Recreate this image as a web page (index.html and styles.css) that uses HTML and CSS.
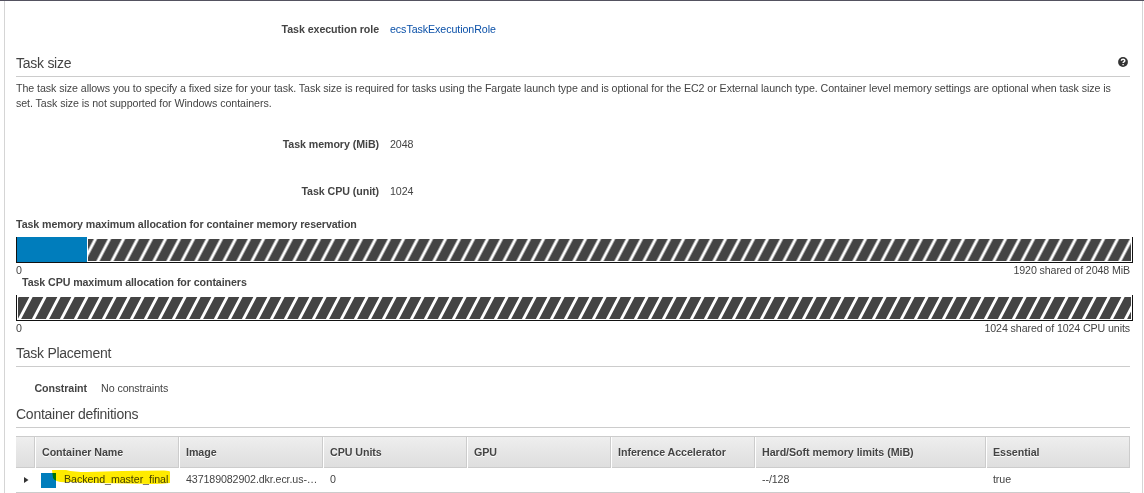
FILE: index.html
```html
<!DOCTYPE html>
<html lang="en">
<head>
<meta charset="utf-8">
<title>Task definition</title>
<link rel="stylesheet" href="styles.css">
</head>
<body>
<main class="panel">
  <dl class="field field-role"><dt>Task execution role</dt><dd><a class="link" href="#">ecsTaskExecutionRole</a></dd></dl>
  <section>
    <h2 class="heading heading-size">Task size
      <svg class="help" viewBox="0 0 10 10" role="img" aria-label="Help"><circle cx="5" cy="5" r="4.9" fill="#333"/><path d="M3.3 3.8C3.3 1.7 6.8 1.7 6.8 3.8C6.8 5 5.1 4.9 5.1 6.1" fill="none" stroke="#fff" stroke-width="1.4"/><path d="M4.4 6.9h1.4v1.3H4.4z" fill="#fff"/></svg>
    </h2>
    <p class="intro">The task size allows you to specify a fixed size for your task. Task size is required for tasks using the Fargate launch type and is optional for the EC2 or External launch type. Container level memory settings are optional when task size is<br>set. Task size is not supported for Windows containers.</p>
    <dl class="field field-memory"><dt>Task memory (MiB)</dt><dd>2048</dd></dl>
    <dl class="field field-cpu"><dt>Task CPU (unit)</dt><dd>1024</dd></dl>
    <div class="allocation">
      <h3 class="allocation-title">Task memory maximum allocation for container memory reservation</h3>
      <div class="bar"><div class="used"></div><svg class="shared"><defs><pattern id="stripes-memory" width="14" height="24" patternUnits="userSpaceOnUse" patternTransform="translate(-5.5 0)"><path d="M0 0h14v24H0z" fill="#444"/><path d="M13.5 -1L0.4 24M27.5 -1L14.4 24M-0.5 -1L-13.6 24" stroke="#fff" stroke-width="2.9"/></pattern></defs><rect width="100%" height="100%" fill="url(#stripes-memory)"/></svg></div>
      <div class="scale"><span>0</span><span>1920 shared of 2048 MiB</span></div>
    </div>
    <div class="allocation">
      <h3 class="allocation-title allocation-title-cpu">Task CPU maximum allocation for containers</h3>
      <div class="bar"><svg class="shared"><defs><pattern id="stripes-cpu" width="14" height="24" patternUnits="userSpaceOnUse"><path d="M0 0h14v24H0z" fill="#444"/><path d="M13.5 -1L0.4 24M27.5 -1L14.4 24M-0.5 -1L-13.6 24" stroke="#fff" stroke-width="2.9"/></pattern></defs><rect width="100%" height="100%" fill="url(#stripes-cpu)"/></svg></div>
      <div class="scale"><span>0</span><span>1024 shared of 1024 CPU units</span></div>
    </div>
  </section>
  <section>
    <h2 class="heading heading-placement">Task Placement</h2>
    <dl class="field field-constraint"><dt>Constraint</dt><dd>No constraints</dd></dl>
  </section>
  <section>
    <h2 class="heading heading-containers">Container definitions</h2>
    <div class="table">
      <div class="row head"><span></span><span>Container Name</span><span>Image</span><span>CPU Units</span><span>GPU</span><span>Inference Accelerator</span><span>Hard/Soft memory limits (MiB)</span><span>Essential</span></div>
      <div class="row data"><span class="expander"><svg class="caret" viewBox="0 0 5 6"><path d="M0 0L4.5 3L0 6z" fill="#333"/></svg></span><span class="name"><i class="swatch"></i><span class="name-text">Backend_master_final</span><svg class="marker" viewBox="0 0 118 15"><path d="M0 0L14 0Q22 2 35 2L70 1L112 0.5Q118 0.5 118 2V13Q110 14 100 14L45 13L17 12Q3 13 1 8z" fill="#ffeb00"/></svg></span><span>437189082902.dkr.ecr.us-…</span><span>0</span><span></span><span></span><span>--/128</span><span>true</span></div>
    </div>
  </section>
</main>
</body>
</html>
```
FILE: styles.css
```css
* { box-sizing: border-box; }
body { margin: 0; height: 493px; overflow: hidden; background: #fff; color: #444; font: 10.67px/15px "Liberation Sans", Arial, sans-serif; letter-spacing: -0.067px; border-top: 1px solid #545260; }
.panel { height: 492px; margin: 0 1px 0 4px; padding: 21px 11px 0; border: solid #d5d5d5; border-width: 0 1px; }
dl, dd, p, h2, h3 { margin: 0; }
.field { display: flex; }
.field dt { width: 363px; text-align: right; font-weight: bold; margin-right: 11px; }
.link { color: #0a50a8; text-decoration: none; }
.heading { display: flex; justify-content: space-between; width: 1114px; height: 23px; border-bottom: 1px solid #ccc; font-size: 14px; line-height: 18px; font-weight: normal; letter-spacing: -0.26px; }
.heading-size { margin-top: 17px; }
.help { width: 10px; height: 10px; margin: 3px 2px 0 0; }
.intro { margin-top: 4px; white-space: nowrap; }
.field-memory { margin-top: 26px; }
.field-cpu { margin-top: 32px; margin-bottom: 18px; }
.allocation { width: 1117px; height: 58px; }
.allocation-title { height: 20px; font-size: 10.67px; line-height: 15px; letter-spacing: -0.087px; }
.allocation-title-cpu { padding-left: 6px; }
.bar { display: flex; height: 26px; border: solid #111; border-width: 0 1px 1px; padding-right: 1px; }
.used { width: 70px; background: #007dbc; }
.shared { flex: 1; height: 22px; margin: 2px 0 0 1px; }
.scale { display: flex; justify-content: space-between; height: 12px; line-height: 14px; padding-right: 3px; letter-spacing: -0.11px; }
.heading-placement { margin-top: 11px; }
.field-constraint { margin-top: 14px; }
.field-constraint dt { width: 71px; margin-right: 14px; }
.heading-containers { margin-top: 9px; }
.table { width: 1114px; margin-top: 8px; }
.row { display: grid; grid-template-columns: 19px 144px 144px 144px 144px 144px 231px 144px; }
.head { height: 32px; border: 1px solid #ccc; border-width: 1px 1px 1px 0; background: linear-gradient(#eee, #dedede); font-weight: bold; line-height: 31px; text-shadow: 0 1px #fff; letter-spacing: -0.04px; }
.head > span { padding-left: 6px; border-left: 1px solid #fff; box-shadow: -1px 0 #ccc; }
.head > span:first-child { border: 0; box-shadow: none; }
.data { height: 25px; border-bottom: 1px solid #ccc; line-height: 23px; letter-spacing: -0.1px; }
.data > span { padding-left: 7px; white-space: nowrap; }
.data .expander { padding-left: 8px; }
.caret { display: block; width: 5px; height: 6px; margin-top: 9px; }
.data .name { position: relative; display: flex; padding-left: 6px; letter-spacing: -0.06px; }
.swatch { width: 15px; height: 15px; margin: 5px 8px 0 0; background: #007dbc; }
.marker { position: absolute; left: 17px; top: 2px; width: 118px; height: 15px; mix-blend-mode: multiply; }
```
